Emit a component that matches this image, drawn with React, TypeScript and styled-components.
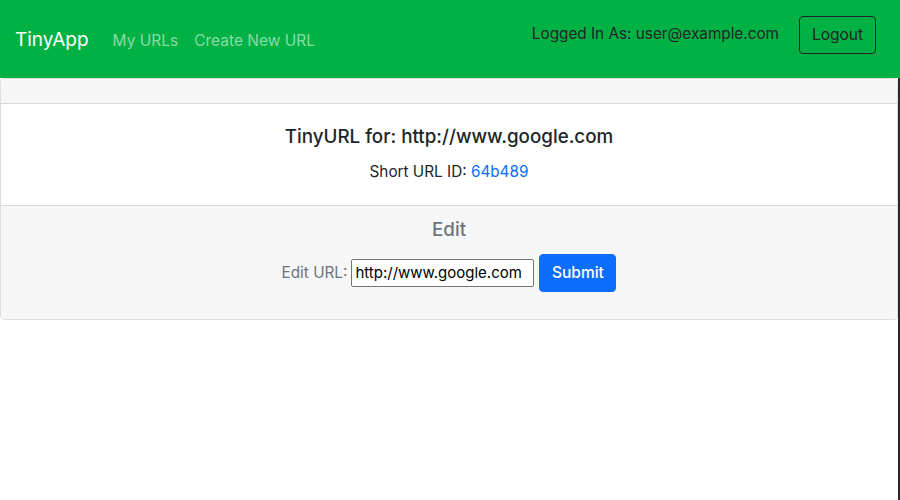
import React from "react";
import styled, { createGlobalStyle } from "styled-components";

const Global = createGlobalStyle`
  html, body { margin: 0; padding: 0; background: #fff; }
  body {
    font-family: Inter, "Liberation Sans", Arial, sans-serif;
    font-size: 16px;
    line-height: 1.5;
    color: #212529;
  }
  * { box-sizing: border-box; }
`;

const Navbar = styled.nav`
  height: 78px;
  background: #00b144;
  display: flex;
  align-items: center;
  padding: 0 24px 0 15px;
`;

const Brand = styled.a`
  font-size: 19px;
  color: #fff;
  text-decoration: none;
  margin-right: 24px;
  padding-top: 3px;
`;

const NavLinks = styled.div`
  display: flex;
  gap: 16px;
  flex: 1;
  padding-top: 3px;
`;

const NavLink = styled.a`
  color: rgba(255, 255, 255, 0.55);
  text-decoration: none;
  font-size: 15.5px;
`;

const RightGroup = styled.div`
  display: flex;
  align-items: center;
  gap: 20px;
`;

const LoggedIn = styled.span`
  color: #212529;
  font-size: 15.3px;
  margin-bottom: 10px;
`;

const OutlineButton = styled.button`
  font-family: inherit;
  font-size: 15.5px;
  line-height: 1.5;
  color: #212529;
  background: transparent;
  border: 1px solid #212529;
  border-radius: 4px;
  padding: 6px 0;
  height: 38px;
  width: 77px;
  margin-top: -9px;
`;

const Page = styled.main`
  border-right: 2px solid #2a2a2a;
  height: 422px;
`;

const Card = styled.section`
  width: 898px;
  border: 1px solid rgba(0, 0, 0, 0.125);
  border-radius: 4px;
  text-align: center;
  overflow: hidden;
`;

const CardHeader = styled.div`
  height: 25px;
  background: #f7f7f7;
  border-bottom: 1px solid rgba(0, 0, 0, 0.125);
`;

const CardBody = styled.div`
  height: 101px;
  padding: 18px 16px 16px;
  display: flex;
  flex-direction: column;
  align-items: center;
`;

const Title = styled.h5`
  margin: 4px 0 0;
  font-size: 18.8px;
  font-weight: 500;
  line-height: 1.2;
`;

const Text = styled.p`
  margin: 12px 0 0;
  font-size: 15.3px;
`;

const Link = styled.a`
  color: #0d6efd;
  text-decoration: none;
`;

const CardFooter = styled.div`
  height: 114px;
  background: #f7f7f7;
  border-top: 1px solid rgba(0, 0, 0, 0.125);
  color: #6c757d;
  padding: 13px 16px 12px;
  display: flex;
  flex-direction: column;
  align-items: center;
`;

const FooterTitle = styled.h5`
  margin: 0;
  font-size: 18.8px;
  font-weight: 500;
  line-height: 1.2;
`;

const Form = styled.form`
  display: flex;
  align-items: center;
  margin-top: 12px;
`;

const Label = styled.label`
  font-size: 15.3px;
  margin-right: 4px;
  padding-top: 1px;
`;

const Input = styled.input`
  font-family: inherit;
  font-size: 15px;
  width: 183px;
  height: 28px;
  border: 1px solid #767676;
  border-radius: 2px;
  padding: 1px 3px;
  color: #000;
  background: #fff;
`;

const PrimaryButton = styled.button`
  font-family: inherit;
  font-size: 15.5px;
  font-weight: 500;
  line-height: 1.5;
  color: #fff;
  background: #0d6efd;
  border: 1px solid #0d6efd;
  border-radius: 4px;
  padding: 6px 0;
  height: 38px;
  width: 77px;
  margin-left: 5px;
`;

export default function App() {
  return (
    <>
      <Global />
      <Navbar>
        <Brand href="#">TinyApp</Brand>
        <NavLinks>
          <NavLink href="#">My URLs</NavLink>
          <NavLink href="#">Create New URL</NavLink>
        </NavLinks>
        <RightGroup>
          <LoggedIn>Logged In As: user@example.com</LoggedIn>
          <OutlineButton type="button">Logout</OutlineButton>
        </RightGroup>
      </Navbar>
      <Page>
        <Card>
          <CardHeader />
          <CardBody>
            <Title>TinyURL for: http://www.google.com</Title>
            <Text>
              Short URL ID: <Link href="#">64b489</Link>
            </Text>
          </CardBody>
          <CardFooter>
            <FooterTitle>Edit</FooterTitle>
            <Form onSubmit={(e) => e.preventDefault()}>
              <Label>Edit URL:</Label>
              <Input defaultValue="http://www.google.com" />
              <PrimaryButton type="submit">Submit</PrimaryButton>
            </Form>
          </CardFooter>
        </Card>
      </Page>
    </>
  );
}
